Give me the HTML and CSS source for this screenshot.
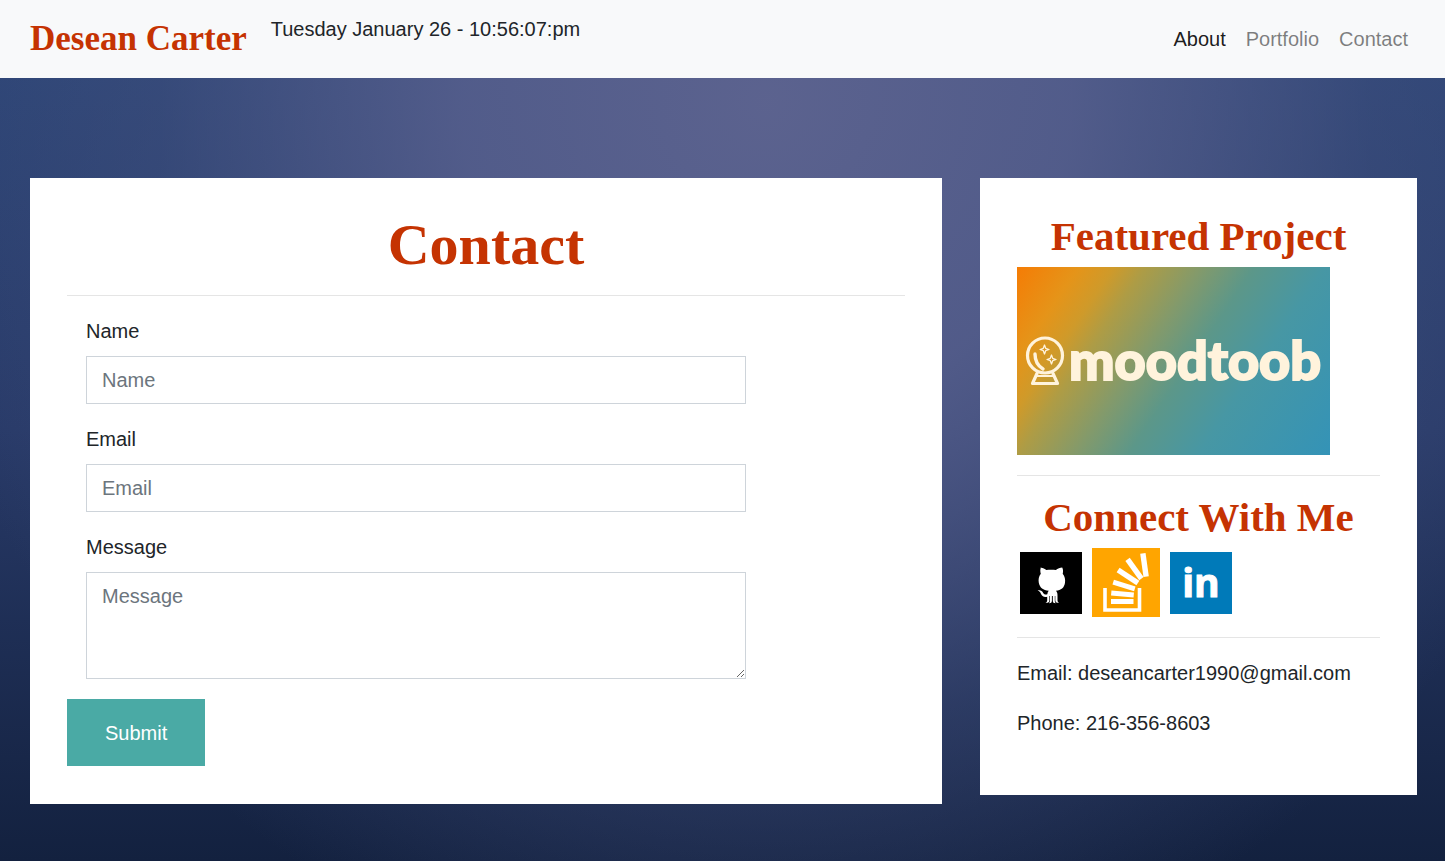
FILE: index.html
```html
<!DOCTYPE html>
<html lang="en">
<head>
<meta charset="utf-8">
<meta name="viewport" content="width=device-width, initial-scale=1">
<title>Desean Carter - Contact</title>
<link rel="stylesheet" href="styles.css">
</head>
<body>
<header class="navbar">
  <a class="brand" href="#">Desean Carter</a>
  <p class="clock">Tuesday January 26 - 10:56:07:pm</p>
  <nav class="nav">
    <a class="nav-link active" href="#">About</a>
    <a class="nav-link" href="#">Portfolio</a>
    <a class="nav-link" href="#">Contact</a>
  </nav>
</header>
<div class="layout">
  <main class="card">
    <h1>Contact</h1>
    <hr>
    <form>
      <div class="group">
        <label for="name">Name</label>
        <input class="control" type="text" id="name" placeholder="Name">
      </div>
      <div class="group">
        <label for="email">Email</label>
        <input class="control" type="email" id="email" placeholder="Email">
      </div>
      <div class="group">
        <label for="message">Message</label>
        <textarea class="control message" id="message" placeholder="Message"></textarea>
      </div>
      <button class="submit" type="submit">Submit</button>
    </form>
  </main>
  <aside class="card">
    <h2>Featured Project</h2>
    <a class="project" href="#" aria-label="moodtoob">
      <svg viewBox="0 0 313 188" width="313" height="188">
        <g fill="none" stroke="#fff3dc" stroke-linecap="round" stroke-linejoin="round">
          <circle cx="28" cy="88.500" r="17.500" stroke-width="3.200"/>
          <path d="M20 106.500l-4.500 10h25l-4.500-10" stroke-width="3.200"/>
          <path d="M20 109h16" stroke-width="2"/>
          <path d="M18 87c0 7 3 12 8 15" stroke-width="3.400"/>
          <path d="M27.500 78l1.200 3.300 3.300 1.200-3.300 1.200-1.200 3.300-1.200-3.300-3.300-1.200 3.300-1.200zM34.500 88l1.200 3.300 3.300 1.200-3.300 1.200-1.200 3.300-1.200-3.300-3.300-1.200 3.300-1.200z" stroke-width="1.300"/>
        </g>
        <text class="project-name" x="52" y="113">moodtoob</text>
      </svg>
    </a>
    <hr>
    <h2>Connect With Me</h2>
    <div class="social">
      <a href="#" aria-label="GitHub">
        <svg viewBox="0 0 62 62" width="62" height="62">
          <path d="M0 0h62v62H0z"/>
          <path fill="#fff" d="M20 15.500c2 0 4.500 1.200 6.300 2.600 3-.6 6.600-.6 9.600 0 1.800-1.400 4.200-2.600 6.300-2.600 1 2 1.100 4.200.5 6.200 2.100 2.600 2.800 5.700 2.300 9-.7 5.200-4 7.300-9 8 1.300 1.500 1.500 3 1.500 5v4.500c0 1.200.4 1.800 1.600 2.600-2.400.3-3.700-.6-3.800-2.600V44h-.5v4.500c0 1.300.2 1.900.9 2.700-2.200 0-2.900-.8-2.900-2.500V44h-.9v4.700c0 1.700-.8 2.500-2.900 2.500.8-.8 1-1.400 1-2.700V44h-.6v4.200c0 2-1.400 2.900-3.900 2.600 1.300-.8 1.700-1.400 1.700-2.600v-3.500c-3.500.7-5.300-.7-6.300-3-.7-1.800-1.500-2.500-3.300-3.200 3-.7 4.500.7 5.600 2.400 1 1.500 2.300 1.900 4.100 1.400.2-1.500.6-2.700 1.400-3.600-5.500-.7-8.900-2.800-9.900-8-.6-3.300 0-6.400 2-9-.6-2-.7-4.200.1-6.200z"/>
        </svg>
      </a>
      <a href="#" aria-label="Stack Overflow">
        <svg viewBox="0 0 68 69" width="68" height="69">
          <path fill="#ffa500" d="M0 0h68v69H0z"/>
          <path fill="none" stroke="#fff" stroke-width="3.600" d="M13 40v22h34.500V40"/>
          <g fill="#fff">
            <path d="M19 51h22.500v5H19z"/>
            <path d="M-11.300-2.500h22.600v5h-22.600z" transform="translate(30.500 46) rotate(5)"/>
            <path d="M-11.300-2.500h22.600v5h-22.600z" transform="translate(32 37.500) rotate(17)"/>
            <path d="M-11.800-2.700h23.600v5.400h-23.600z" transform="translate(36 28.500) rotate(33)"/>
            <path d="M-11.800-2.700h23.600v5.400h-23.600z" transform="translate(42.500 21) rotate(54)"/>
            <path d="M-11.800-2.700h23.600v5.400h-23.600z" transform="translate(52.500 17) rotate(82)"/>
          </g>
        </svg>
      </a>
      <a href="#" aria-label="LinkedIn">
        <svg viewBox="0 0 62 62" width="62" height="62">
          <path fill="#007ab9" d="M0 0h62v62H0z"/>
          <text class="in" x="31" y="45" text-anchor="middle">in</text>
        </svg>
      </a>
    </div>
    <hr>
    <p>Email: deseancarter1990@gmail.com</p>
    <p>Phone: 216-356-8603</p>
  </aside>
</div>
</body>
</html>
```
FILE: styles.css
```css
* {
  box-sizing: border-box;
}

body {
  margin: 0;
  min-height: 100vh;
  color: #212529;
  font: 20px/30px "Liberation Sans", Arial, sans-serif;
  background:
    radial-gradient(ellipse 60% 105% at 53% 12%, rgba(94, 100, 144, 0.95), rgba(88, 96, 142, 0.85) 35%, rgba(66, 80, 126, 0.45) 70%, rgba(48, 74, 124, 0)),
    linear-gradient(#2d4779, #283a68 50%, #13213f);
}

.navbar {
  display: flex;
  align-items: center;
  gap: 24px;
  min-height: 78px;
  padding: 0 27px 0 30px;
  background: #f8f9fa;
}

.brand,
h1,
h2 {
  color: #c53302;
  font-family: Georgia, "Liberation Serif", serif;
  font-weight: 700;
}

.brand {
  font-size: 35px;
  text-decoration: none;
}

p {
  margin: 0 0 20px;
}

.nav {
  display: flex;
  margin-left: auto;
}

.nav-link {
  padding: 10px;
  color: rgba(0, 0, 0, 0.5);
  text-decoration: none;
}

.nav-link.active {
  color: rgba(0, 0, 0, 0.9);
}

.layout {
  display: grid;
  grid-template-columns: 912fr 437fr;
  align-items: start;
  gap: 38px;
  padding: 100px 28px 57px 30px;
}

.card {
  padding: 37px 37px 38px;
  background: #fff;
}

aside.card {
  padding-bottom: 37px;
}

h1 {
  margin: 0;
  font-size: 58px;
  line-height: 60px;
  text-align: center;
}

h2 {
  margin: 0 0 10px;
  font-size: 41px;
  line-height: 42px;
  text-align: center;
  white-space: nowrap;
}

hr {
  margin: 20px 0;
  border: 0;
  border-top: 1px solid #e5e5e5;
}

.group {
  width: 83.3333%;
  margin-bottom: 20px;
  padding: 0 19px;
}

.group label {
  display: block;
  margin-bottom: 10px;
}

.control {
  display: block;
  width: 100%;
  height: 48px;
  padding: 8px 15px;
  border: 1px solid #ced4da;
  border-radius: 0;
  background: #fff;
  color: #495057;
  font: inherit;
}

.control::placeholder {
  color: #6c757d;
}

.message {
  height: 107px;
  resize: vertical;
}

.submit {
  display: block;
  padding: 19px 38px 18px;
  border: 0;
  background: #4aaaa5;
  color: #fff;
  font: inherit;
}

.project {
  display: block;
}

.project svg {
  display: block;
  max-width: 100%;
  background: linear-gradient(124deg, #f57c05, #e59419 14%, #cf9a2a 22%, #ae9c45 29%, #839a6b 42%, #5c9789 54%, #4797a4 70%, #3493b7);
}

.project-name {
  fill: #fff3dc;
  stroke: #fff3dc;
  stroke-width: 2px;
  font: 900 54px Lato, sans-serif;
}

.social {
  display: flex;
  align-items: center;
  gap: 10px;
  padding-left: 3px;
}

.social svg {
  display: block;
}

.in {
  fill: #fff;
  stroke: #fff;
  stroke-width: 1px;
  font: 700 39px "Open Sans", sans-serif;
}
```
